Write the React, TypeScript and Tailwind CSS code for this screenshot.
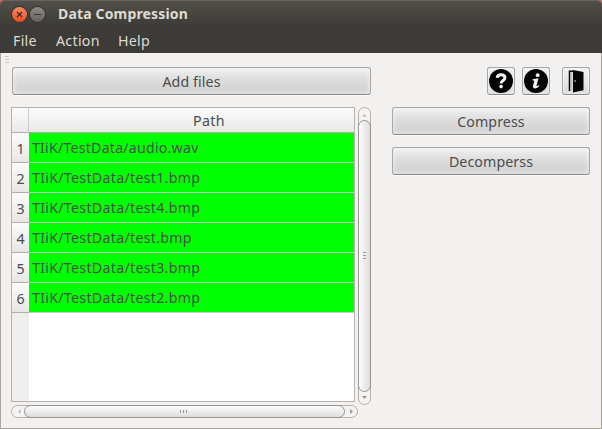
import type { ReactNode } from 'react';

const files = [
  { path: 'TIiK/TestData/audio.wav', spacing: 'tracking-[0.21px]' },
  { path: 'TIiK/TestData/test1.bmp', spacing: 'tracking-[0.29px]' },
  { path: 'TIiK/TestData/test4.bmp', spacing: 'tracking-[0.29px]' },
  { path: 'TIiK/TestData/test.bmp', spacing: 'tracking-[0.29px]' },
  { path: 'TIiK/TestData/test3.bmp', spacing: 'tracking-[0.29px]' },
  { path: 'TIiK/TestData/test2.bmp', spacing: 'tracking-[0.29px]' },
];

function PushButton({ children }: { children: ReactNode }) {
  return (
    <button className="flex h-7 w-full items-center justify-center rounded-[3px] border border-[#a9a6a4] border-b-[#8b8988] bg-linear-to-b from-[#efefef] via-[#dcdcdc] via-50% to-[#cfcfcf] pt-[3px] tracking-[0.1px] shadow-[inset_0_0_5px_1px_rgba(248,248,248,0.7),0_1px_0_#fafafa]">
      {children}
    </button>
  );
}

function IconButton({ children, label }: { children: ReactNode; label: string }) {
  return (
    <button aria-label={label} className="flex size-7 items-center justify-center rounded-[3px] border border-[#a9a6a4] border-b-[#8b8988] bg-linear-to-b from-[#f0f0f0] to-[#dcdcdc] shadow-[inset_0_0_3px_#fff,0_1px_0_#fafafa]">
      {children}
    </button>
  );
}

function HelpIcon() {
  return (
    <svg className="size-[26px] shrink-0" viewBox="0 0 26 26" fill="none">
      <circle cx="13" cy="13" r="12" fill="#050505" />
      <path d="M9.2 9.9C9.3 7.700 11 6.700 13.1 6.700c2.300 0 3.800 1.100 3.800 3 0 3-3.700 2.700-3.700 5.700" stroke="#f2f2f2" strokeWidth="3" />
      <circle cx="13.1" cy="18.600" r="1.800" fill="#f2f2f2" />
    </svg>
  );
}

function InfoIcon() {
  return (
    <svg className="size-[26px] shrink-0" viewBox="0 0 26 26" fill="none">
      <circle cx="13" cy="13" r="12" fill="#050505" />
      <circle cx="14.7" cy="7.2" r="1.9" fill="#f2f2f2" />
      <path d="M9.500 11.2l6-1-1.900 7.200c-.2 1 .8.9 2-.5l.8.8c-1.400 2-3 2.700-4.300 2.700-1.900 0-2.500-1.100-2.100-2.600l1.200-4.500c.2-.8-.3-.9-1.700-.8z" fill="#f2f2f2" />
    </svg>
  );
}

function DoorIcon() {
  return (
    <svg className="size-[26px] shrink-0" viewBox="0 0 26 26" fill="none">
      <path d="M6.500 23V3.200H11" stroke="#050505" strokeWidth="1.500" />
      <path d="M8.500 4v19" stroke="#c4c4c4" strokeWidth="1.500" />
      <path d="M10 2l10.500 2v18.200L10 24.500z" fill="#050505" />
      <circle cx="12" cy="13" r=".8" fill="#eee" />
    </svg>
  );
}

function Titlebar() {
  return (
    <header className="h-[53px] rounded-t-[5px] border-t border-[#65635d] bg-linear-to-b from-[#504f49] to-[#3c3b37] to-50% text-[#dfdbd2]">
      <div className="flex h-[27px] items-center pl-3">
        <span className="flex size-[15px] items-center justify-center rounded-full bg-linear-to-b from-[#f58a67] to-[#e54c1c] shadow-[0_0_0_1px_#35322d]">
          <svg className="size-[7px]" viewBox="0 0 7 7"><path d="M1 1l5 5M6 1L1 6" stroke="#492519" strokeWidth="1.2" /></svg>
        </span>
        <span className="ml-[3px] flex size-[15px] items-center justify-center rounded-full bg-linear-to-b from-[#8c8a84] to-[#65635d] shadow-[0_0_0_1px_#35322d]">
          <span className="h-px w-[7px] bg-[#353430]" />
        </span>
        <span className="ml-[13px] pb-0.5 text-[14px] font-bold tracking-[0.16px] whitespace-nowrap">Data Compression</span>
      </div>
      <nav className="flex h-[25px] items-center pt-0.5 pl-[13px] text-[14.2px] tracking-[0.3px]">
        <span className="w-[43px]">File</span>
        <span className="w-[62px]">Action</span>
        <span>Help</span>
      </nav>
    </header>
  );
}

function FileTable() {
  return (
    <div className="flex h-[295px] w-[344px] flex-col border border-[#b6b2af] bg-white">
      <div className="flex h-[25px] shrink-0 border-b border-[#b2aeaa] bg-linear-to-b from-[#fcfcfc] to-[#e9e8e7]">
        <div className="w-[17px] border-r border-[#cdcac8]" />
        <div className="flex flex-1 items-center justify-center pt-[3px] pl-[35px] tracking-[0.4px]">Path</div>
      </div>
      {files.map((file, index) => (
        <div key={file.path} className="flex h-[30px] shrink-0">
          <div className="flex w-[17px] items-center justify-center border-b border-[#b2aeaa] bg-linear-to-b from-[#fbfbfb] to-[#e8e7e6] pt-[3px]">{index + 1}</div>
          <div className={`flex flex-1 items-center border-b border-[#c9c9c9] bg-[#00ff00] pt-0.5 pl-[3px] whitespace-nowrap ${file.spacing}`}>{file.path}</div>
        </div>
      ))}
      <div className="w-[17px] flex-1 bg-[#f0efee]" />
    </div>
  );
}

function VerticalScrollbar() {
  return (
    <div className="flex h-[298px] w-[13px] flex-col items-center rounded-full border border-[#b5b2af] bg-[#f4f3f2]">
      <svg className="h-3 w-[11px] shrink-0" viewBox="0 0 11 12"><path d="M3.500 8.500l2-2.200 2 2.200z" fill="#aaa" /></svg>
      <div className="-mx-px flex h-[272px] w-[13px] shrink-0 flex-col items-center justify-center gap-0.5 rounded-full border border-[#979492] bg-linear-to-r from-[#fdfdfd] to-[#dedddc] pb-px">
        <span className="h-px w-[3px] bg-[#999]" />
        <span className="h-px w-[3px] bg-[#999]" />
        <span className="h-px w-[3px] bg-[#999]" />
      </div>
      <svg className="h-3 w-[11px] shrink-0" viewBox="0 0 11 12"><path d="M3 4h5L5.500 7z" fill="#999" /></svg>
    </div>
  );
}

function HorizontalScrollbar() {
  return (
    <div className="flex h-[13px] w-[347px] items-center rounded-full border border-[#b5b2af] bg-[#f4f3f2]">
      <svg className="h-[11px] w-3 shrink-0" viewBox="0 0 12 11"><path d="M8.500 3.500l-2.200 2 2.200 2z" fill="#aaa" /></svg>
      <div className="-my-px flex h-[13px] w-[321px] shrink-0 items-center justify-center gap-0.5 rounded-full border border-[#979492] bg-linear-to-b from-[#fdfdfd] to-[#dedddc] pr-0.5">
        <span className="h-[3px] w-px bg-[#999]" />
        <span className="h-[3px] w-px bg-[#999]" />
        <span className="h-[3px] w-px bg-[#999]" />
      </div>
      <svg className="h-[11px] w-3 shrink-0" viewBox="0 0 12 11"><path d="M5 3v5l3-2.500z" fill="#999" /></svg>
    </div>
  );
}

export default function App() {
  return (
    <div className="h-[429px] w-[602px] overflow-hidden bg-[linear-gradient(90deg,#d45f58_5px,#3c3b37_5px,#3c3b37_597px,#c5756b_597px)] font-['Noto_Sans','Open_Sans',sans-serif] text-[14.2px] leading-none text-[#4c4c4c]">
      <Titlebar />
      <div className="flex h-[376px] flex-col border border-t-0 border-[#aaa69f] bg-[#f2f1f0]">
        <div className="flex h-3.5 flex-col gap-0.5 pt-[3px] pl-1">
          <span className="h-px w-1 bg-[#cbc9c6]" />
          <span className="h-px w-1 bg-[#cbc9c6]" />
          <span className="h-px w-1 bg-[#cbc9c6]" />
        </div>
        <div className="flex pl-2.5">
          <section className="w-[360px]">
            <div className="mb-3 pl-px"><PushButton>Add files</PushButton></div>
            <div className="flex justify-between">
              <div className="flex flex-col gap-[3px]">
                <FileTable />
                <HorizontalScrollbar />
              </div>
              <VerticalScrollbar />
            </div>
          </section>
          <aside className="ml-[21px] w-[198px]">
            <div className="mb-3 flex justify-end">
              <IconButton label="Help"><HelpIcon /></IconButton>
              <span className="w-[7px]" />
              <IconButton label="About"><InfoIcon /></IconButton>
              <span className="w-3" />
              <IconButton label="Exit"><DoorIcon /></IconButton>
            </div>
            <div className="flex flex-col gap-3">
              <PushButton>Compress</PushButton>
              <PushButton>Decomperss</PushButton>
            </div>
          </aside>
        </div>
      </div>
    </div>
  );
}
